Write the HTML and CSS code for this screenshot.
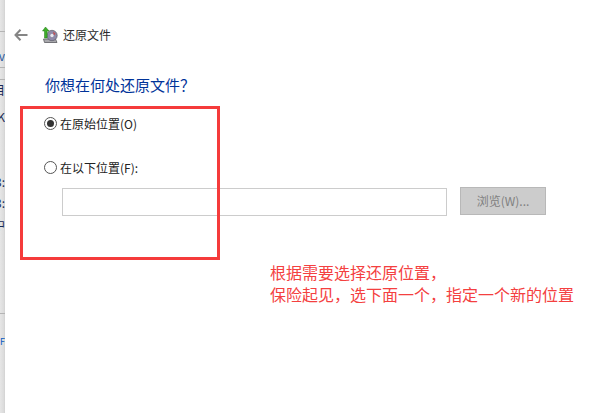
FILE: index.html
```html
<!DOCTYPE html>
<html lang="zh">
<head>
<meta charset="utf-8">
<title>还原文件</title>
<link rel="stylesheet" href="styles.css">
</head>
<body>
<div class="page">
  <aside class="strip">
    <div class="strip-line l1"></div>
    <div class="strip-text t1">v</div>
    <div class="strip-line l2"></div>
    <div class="strip-line l3"></div>
    <div class="strip-text t2">目</div>
    <div class="strip-text t3">K</div>
    <div class="strip-text t4">3:</div>
    <div class="strip-text t5">3:</div>
    <div class="strip-text t6">中</div>
    <div class="strip-line l4"></div>
    <div class="strip-text t7">F</div>
  </aside>
  <main class="main">
    <header class="head">
      <svg class="back" width="14" height="12" viewBox="0 0 14 12" aria-hidden="true"><path d="M6.500 .8 1.500 6l5 5.200M2 6h11.500" fill="none" stroke="#858585" stroke-width="2"/></svg>
      <svg class="app" width="17" height="18" viewBox="0 0 17 18" aria-hidden="true">
        <path d="M1.500 13h12l1.500 3.500H2.500z" fill="#a9a9ad" stroke="#5b5b60" stroke-width=".8"/>
        <circle cx="10" cy="9.500" r="5.200" fill="#8f8aa8" stroke="#5f5f6a" stroke-width=".7"/>
        <circle cx="10" cy="9.500" r="1.700" fill="#e8e8ee"/>
        <path d="M11 5.500l2.500 2-1.500 2z" fill="#c84a4a"/>
        <path d="M3.500 1 .5 5h2v7h2.600V5h2z" fill="#3fae2a" stroke="#1f7a16" stroke-width=".5"/>
      </svg>
      <span class="head-title">还原文件</span>
    </header>
    <h1 class="question">你想在何处还原文件？</h1>
    <div class="options">
      <div class="option"><span class="radio checked"></span><span>在原始位置(O)</span></div>
      <div class="option"><span class="radio"></span><span>在以下位置(F):</span></div>
      <div class="path-row">
        <div class="path-input"></div>
        <div class="browse">浏览(W)...</div>
      </div>
    </div>
    <div class="note">
      <p>根据需要选择还原位置，</p>
      <p>保险起见，选下面一个，指定一个新的位置</p>
    </div>
  </main>
</div>
<div class="mark"></div>
</body>
</html>
```

FILE: styles.css
```css
* { box-sizing: border-box; }
html, body { margin: 0; padding: 0; background: #fff; }
body {
  width: 610px;
  height: 413px;
  overflow: hidden;
  position: relative;
  font-family: "Noto Sans CJK SC", "Liberation Sans", sans-serif;
  color: #222;
}
.page { display: flex; height: 413px; }
.strip {
  width: 5px;
  flex: none;
  position: relative;
  overflow: hidden;
  background: linear-gradient(to right, #e6e6e6, #dcdcdc 70%, #d2d2d2);
}
.strip-line { position: absolute; left: 0; width: 5px; height: 1px; background: #b4b4b4; }
.l1 { top: 31px; }
.l2 { top: 67px; }
.l3 { top: 79px; }
.l4 { top: 313px; }
.strip-text {
  position: absolute;
  right: 0;
  width: 12px;
  text-align: right;
  font-size: 12px;
  line-height: 14px;
  color: #1a2a55;
  white-space: nowrap;
}
.t1 { top: 49px; color: #2a5aa0; }
.t2 { top: 83px; }
.t3 { top: 110px; }
.t4 { top: 175px; }
.t5 { top: 196px; }
.t6 { top: 218px; }
.t7 { top: 335px; font-size: 9px; color: #0a5ac0; }

.main { flex: 1; display: flex; flex-direction: column; padding-left: 9px; }
.head { display: flex; align-items: center; height: 18px; margin-top: 26px; }
.back { margin-right: 14px; }
.app { margin-right: 4px; }
.head-title { font-size: 12px; line-height: 18px; color: #2a2a2a; }
.question {
  margin: 31px 0 0 31px;
  font-size: 15px;
  line-height: 20px;
  font-weight: 400;
  color: #003399;
}
.options { margin: 19px 0 0 30px; }
.option { display: flex; align-items: center; height: 18px; font-size: 12px; color: #222; margin-bottom: 26px; }
.radio {
  width: 13px;
  height: 13px;
  border: 1px solid #555;
  border-radius: 50%;
  margin-right: 3px;
  display: flex;
  align-items: center;
  justify-content: center;
  flex: none;
}
.checked::after { content: ""; width: 7px; height: 7px; border-radius: 50%; background: #333; }
.path-row { display: flex; align-items: flex-start; margin: -14px 0 0 18px; }
.path-input { width: 385px; height: 28px; border: 1px solid #ccc; background: #fff; }
.browse {
  width: 86px;
  height: 28px;
  margin: -1px 0 0 13px;
  background: #ccc;
  border: 1px solid #b8b8b8;
  font-size: 12px;
  line-height: 26px;
  text-align: center;
  color: #808080;
}
.note { margin: 45px 0 0 256px; font-size: 16px; line-height: 22px; color: #f44040; white-space: nowrap; }
.note p { margin: 0; }
.mark {
  position: absolute;
  left: 20px;
  top: 106px;
  width: 200px;
  height: 154px;
  border: 3px solid #f53b3b;
  pointer-events: none;
}
```
